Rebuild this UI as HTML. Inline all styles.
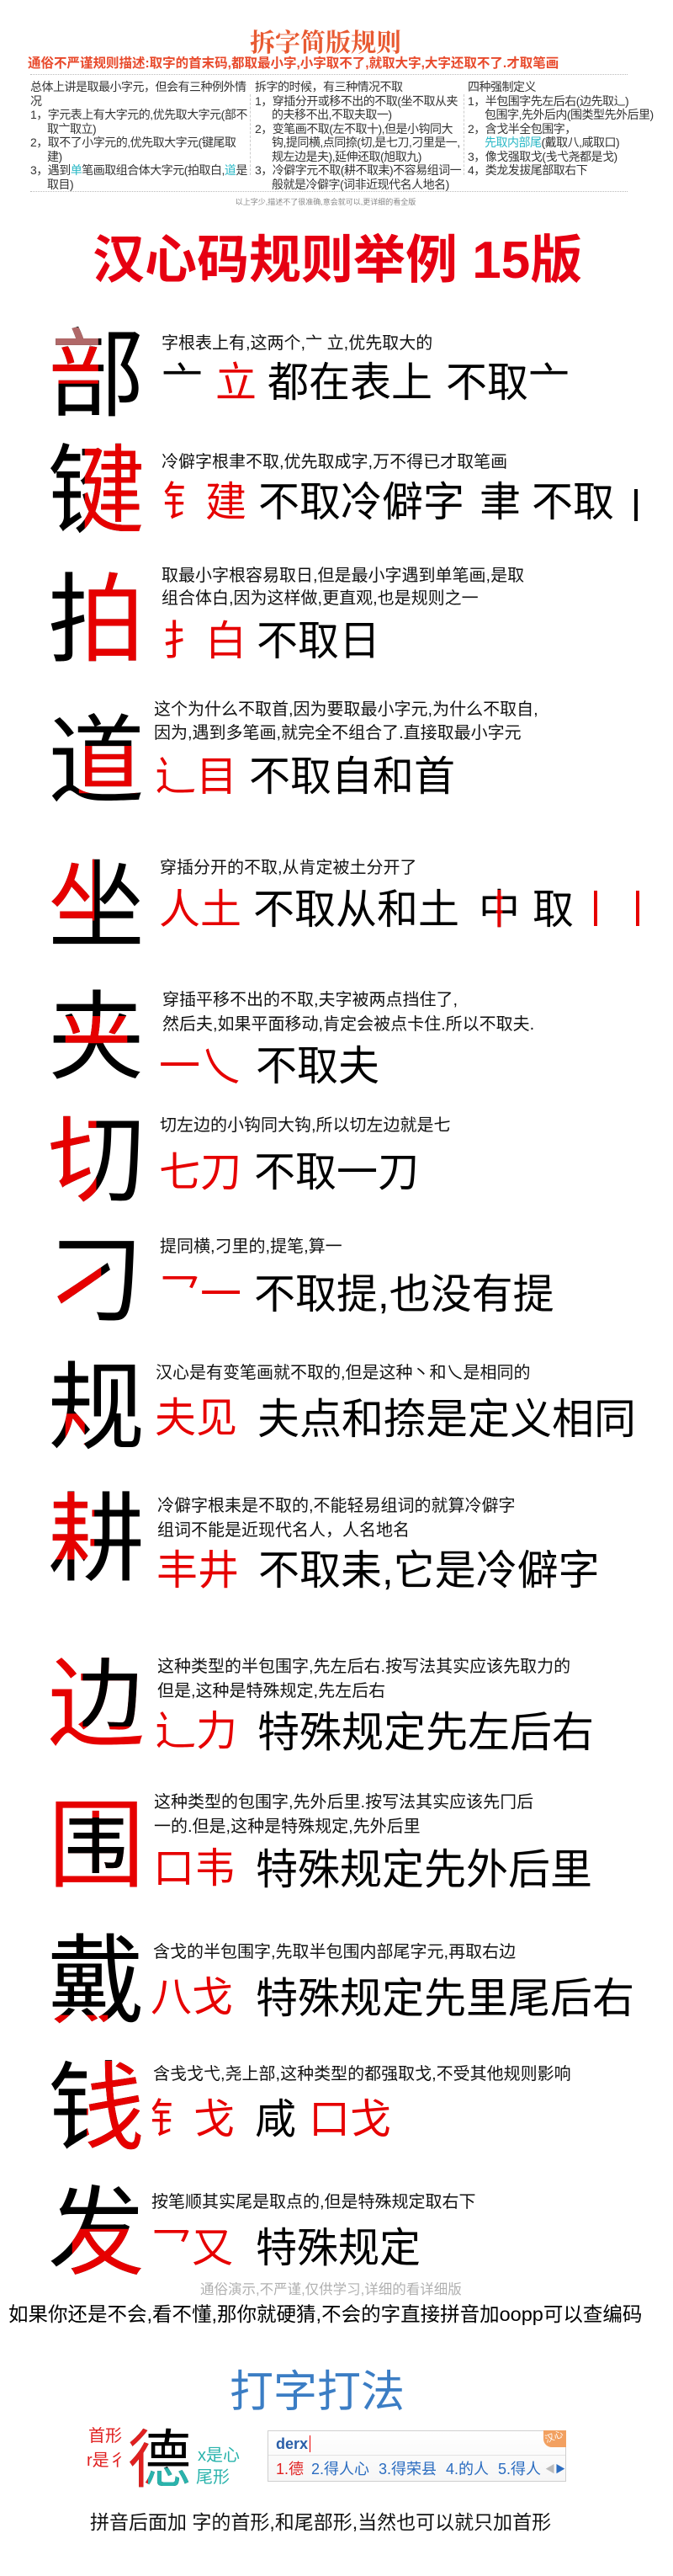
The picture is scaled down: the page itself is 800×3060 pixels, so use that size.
<!DOCTYPE html>
<html><head><meta charset="utf-8"><style>
*{margin:0;padding:0;box-sizing:border-box}
body{width:800px;height:3060px;background:#fff;position:relative;overflow:hidden;font-family:"Liberation Sans","Noto Sans CJK SC",sans-serif;color:#000}
.t{position:absolute;white-space:nowrap;line-height:1}
.b{position:absolute;font-size:115px;line-height:1;white-space:nowrap;left:57px}
.l1{font-size:20px;color:#111}
.l2{font-size:49px}
.r{color:#e60000}
.col{position:absolute;top:95px;font-size:14px;letter-spacing:-0.5px;line-height:16.5px;color:#333}
.col p{padding-left:20px;text-indent:-20px}
.col p.h{padding-left:0;text-indent:0}
.tl{color:#2ab8c6}
.bar{position:absolute;width:4px;height:42px;background:#e60000}
</style></head><body>

<div class="t" style="left:297px;top:33px;font-size:30px;font-family:'Noto Serif CJK SC',serif;font-weight:bold;color:#e85a32">拆字简版规则</div>
<div class="t" style="left:33px;top:68px;font-size:15.5px;font-weight:bold;color:#e84a2c">通俗不严谨规则描述:取字的首末码,都取最小字,小字取不了,就取大字,大字还取不了.才取笔画</div>
<div style="position:absolute;left:36px;top:88px;width:710px;border-top:1px dotted #bbb"></div>

<div class="col" style="left:36px;width:260px">
<p class="h">总体上讲是取最小字元，但会有三种例外情况</p>
<p>1，字元表上有大字元的,优先取大字元(部不取亠取立)</p>
<p>2，取不了小字元的,优先取大字元(键尾取建)</p>
<p>3，遇到<span class="tl">单</span>笔画取组合体大字元(拍取白,<span class="tl">道</span>是取目)</p>
</div>
<div style="position:absolute;left:297px;top:112px;height:96px;border-left:1px dashed #ccc"></div>
<div class="col" style="left:303px;width:248px">
<p class="h">拆字的时候，有三种情况不取</p>
<p>1，穿插分开或移不出的不取(坐不取从夹的夫移不出,不取夫取一)</p>
<p>2，变笔画不取(左不取十),但是小钩同大钩,提同横,点同捺(切,是七刀,刁里是一,规左边是夫),延伸还取(旭取九)</p>
<p>3，冷僻字元不取(耕不取耒)不容易组词一般就是冷僻字(词非近现代名人地名)</p>
</div>
<div style="position:absolute;left:551px;top:112px;height:96px;border-left:1px dashed #ccc"></div>
<div class="col" style="left:556px;width:222px">
<p class="h">四种强制定义</p>
<p>1，半包围字先左后右(边先取辶)<br>包围字,先外后内(围类型先外后里)</p>
<p>2，含戈半全包围字，<br><span class="tl">先取内部尾</span>(戴取八,咸取口)</p>
<p>3，像戈强取戈(戋弋尧都是戈)</p>
<p>4，类龙发拔尾部取右下</p>
</div>
<div style="position:absolute;left:36px;top:227px;width:710px;border-top:1px dotted #bbb"></div>
<div class="t" style="left:0;width:774px;text-align:center;top:236px;font-size:9px;color:#888">以上字少,描述不了很准确,意会就可以,更详细的看全版</div>

<div class="t" style="left:110px;top:279px;font-size:62px;font-weight:bold;color:#e60012">汉心码规则举例 15版</div>

<!-- 部 -->
<div class="b" style="top:389px">部</div>
<div class="b r" style="top:389px;clip-path:inset(20% 48% 42% 0)">部</div>
<div class="b" style="top:389px;color:#b06868;clip-path:inset(0 48% 80% 0)">部</div>
<div class="t l1" style="left:192px;top:398px">字根表上有,这两个,亠 立,优先取大的</div>
<div class="t l2" style="left:192px;top:431px">亠</div>
<div class="t l2 r" style="left:256px;top:431px">立</div>
<div class="t l2" style="left:318px;top:431px">都在表上</div>
<div class="t l2" style="left:530px;top:431px">不取亠</div>

<!-- 键 -->
<div class="b" style="top:527px">键</div>
<div class="b r" style="top:527px;clip-path:inset(0 0 0 38%)">键</div>
<div class="t l1" style="left:192px;top:539px">冷僻字根聿不取,优先取成字,万不得已才取笔画</div>
<div class="t l2 r" style="left:193px;top:573px">钅</div>
<div class="t l2 r" style="left:244px;top:573px">建</div>
<div class="t l2" style="left:307px;top:573px">不取冷僻字</div>
<div class="t l2" style="left:570px;top:573px">聿</div>
<div class="t l2" style="left:632px;top:573px">不取</div>
<div style="position:absolute;left:754px;top:581px;width:4px;height:38px;background:#000"></div>

<!-- 拍 -->
<div class="b" style="top:680px">拍</div>
<div class="b r" style="top:680px;clip-path:inset(0 0 0 42%)">拍</div>
<div class="t l1" style="left:192px;top:674px">取最小字根容易取日,但是最小字遇到单笔画,是取</div>
<div class="t l1" style="left:192px;top:701px">组合体白,因为这样做,更直观,也是规则之一</div>
<div class="t l2 r" style="left:193px;top:738px">扌</div>
<div class="t l2 r" style="left:244px;top:738px">白</div>
<div class="t l2" style="left:305px;top:738px">不取日</div>

<!-- 道 -->
<div class="b" style="top:848px">道</div>
<div class="b r" style="top:848px;clip-path:inset(33% 8% 18% 32%)">道</div>
<div class="t l1" style="left:183px;top:833px">这个为什么不取首,因为要取最小字元,为什么不取自,</div>
<div class="t l1" style="left:183px;top:861px">因为,遇到多笔画,就完全不组合了.直接取最小字元</div>
<div class="t l2 r" style="left:184px;top:899px">辶目</div>
<div class="t l2" style="left:296px;top:899px">不取自和首</div>

<!-- 坐 -->
<div class="b" style="top:1020px">坐</div>
<div class="b r" style="top:1020px;clip-path:inset(0 52% 36% 0)">坐</div>
<div class="t l1" style="left:190px;top:1021px">穿插分开的不取,从肯定被土分开了</div>
<div class="t l2 r" style="left:189px;top:1057px">人土</div>
<div class="t l2" style="left:301px;top:1057px">不取从和土</div>
<div class="t l2" style="left:569px;top:1057px">中</div>
<div class="t l2 r" style="left:569px;top:1057px;clip-path:inset(0 42% 0 42%)">中</div>
<div class="t l2" style="left:633px;top:1057px">取</div>
<div class="bar" style="left:706px;top:1058px"></div>
<div class="bar" style="left:756px;top:1058px"></div>

<!-- 夹 -->
<div class="b" style="top:1176px">夹</div>
<div class="b r" style="top:1176px;clip-path:inset(27% 18% 45% 18%)">夹</div>
<div class="t l1" style="left:193px;top:1178px">穿插平移不出的不取,夫字被两点挡住了,</div>
<div class="t l1" style="left:193px;top:1207px">然后夫,如果平面移动,肯定会被点卡住.所以不取夫.</div>
<div class="t l2 r" style="left:189px;top:1243px">一乀</div>
<div class="t l2" style="left:304px;top:1243px">不取夫</div>

<!-- 切 -->
<div class="b" style="top:1322px">切</div>
<div class="b r" style="top:1322px;clip-path:inset(0 50% 0 0)">切</div>
<div class="t l1" style="left:190px;top:1327px">切左边的小钩同大钩,所以切左边就是七</div>
<div class="t l2 r" style="left:189px;top:1369px">七刀</div>
<div class="t l2" style="left:302px;top:1369px">不取一刀</div>

<!-- 刁 -->
<div class="b" style="top:1464px">刁</div>
<div class="b r" style="top:1464px;clip-path:inset(30% 45% 22% 0)">刁</div>
<div class="t l1" style="left:190px;top:1471px">提同横,刁里的,提笔,算一</div>
<div class="t l2 r" style="left:189px;top:1514px">乛一</div>
<div class="t l2" style="left:302px;top:1514px">不取提,也没有提</div>

<!-- 规 -->
<div class="b" style="top:1616px">规</div>
<div class="b r" style="top:1616px;clip-path:inset(55% 62% 12% 18%)">规</div>
<div class="t l1" style="left:185px;top:1621px">汉心是有变笔画就不取的,但是这种丶和乀是相同的</div>
<div class="t l2 r" style="left:184px;top:1661px">夫见</div>
<div class="t" style="left:306px;top:1661px;font-size:50px">夫点和捺是定义相同</div>

<!-- 耕 -->
<div class="b" style="top:1772px">耕</div>
<div class="b r" style="top:1772px;clip-path:inset(0 52% 30% 0)">耕</div>
<div class="t l1" style="left:187px;top:1779px">冷僻字根耒是不取的,不能轻易组词的就算冷僻字</div>
<div class="t l1" style="left:187px;top:1808px">组词不能是近现代名人，人名地名</div>
<div class="t l2 r" style="left:186px;top:1842px">丰井</div>
<div class="t l2" style="left:307px;top:1842px">不取耒,它是冷僻字</div>

<!-- 边 -->
<div class="b r" style="top:1968px">边</div>
<div class="b" style="top:1968px;clip-path:polygon(36% 0,100% 0,100% 72%,36% 72%)">边</div>
<div class="t l1" style="left:187px;top:1970px">这种类型的半包围字,先左后右.按写法其实应该先取力的</div>
<div class="t l1" style="left:187px;top:1999px">但是,这种是特殊规定,先左后右</div>
<div class="t l2 r" style="left:184px;top:2033px">辶力</div>
<div class="t" style="left:306px;top:2033px;font-size:50px">特殊规定先左后右</div>

<!-- 围 -->
<div class="b r" style="top:2136px">围</div>
<div class="b" style="top:2136px;clip-path:inset(20% 16% 20% 16%)">围</div>
<div class="t l1" style="left:183px;top:2131px">这种类型的包围字,先外后里.按写法其实应该先冂后</div>
<div class="t l1" style="left:183px;top:2160px">一的.但是,这种是特殊规定,先外后里</div>
<div class="t l2 r" style="left:182px;top:2196px">口韦</div>
<div class="t" style="left:304px;top:2196px;font-size:50px">特殊规定先外后里</div>

<!-- 戴 -->
<div class="b" style="top:2297px">戴</div>
<div class="b r" style="top:2297px;clip-path:inset(84% 38% 0 0)">戴</div>
<div class="t l1" style="left:182px;top:2309px">含戈的半包围字,先取半包围内部尾字元,再取右边</div>
<div class="t l2 r" style="left:179px;top:2349px">八戈</div>
<div class="t" style="left:304px;top:2349px;font-size:50px">特殊规定先里尾后右</div>

<!-- 钱 -->
<div class="b" style="top:2448px">钱</div>
<div class="b r" style="top:2448px;clip-path:inset(0 0 0 40%)">钱</div>
<div class="t l1" style="left:182px;top:2454px">含戋戈弋,尧上部,这种类型的都强取戈,不受其他规则影响</div>
<div class="t l2 r" style="left:178px;top:2494px">钅</div>
<div class="t l2 r" style="left:230px;top:2494px">戈</div>
<div class="t l2" style="left:303px;top:2494px">咸</div>
<div class="t l2 r" style="left:367px;top:2494px">口戈</div>

<!-- 发 -->
<div class="b" style="top:2596px">发</div>
<div class="b r" style="top:2596px;clip-path:inset(45% 0 0 25%)">发</div>
<div class="t l1" style="left:180px;top:2606px">按笔顺其实尾是取点的,但是特殊规定取右下</div>
<div class="t l2 r" style="left:179px;top:2647px">乛又</div>
<div class="t l2" style="left:304px;top:2647px">特殊规定</div>

<div class="t" style="left:238px;top:2712px;font-size:16.5px;color:#b0b0b0">通俗演示,不严谨,仅供学习,详细的看详细版</div>
<div class="t" style="left:10px;top:2738px;font-size:23.5px">如果你还是不会,看不懂,那你就硬猜,不会的字直接拼音加oopp可以查编码</div>

<div class="t" style="left:273px;top:2816px;font-size:52px;color:#3b7dc4">打字打法</div>

<div class="t" style="left:105px;top:2884px;font-size:20px;color:#e02020">首形</div>
<div class="t" style="left:103px;top:2913px;font-size:20px;color:#e02020">r是彳</div>
<div class="t" style="left:152px;top:2885px;font-size:75px">德</div>
<div class="t" style="left:152px;top:2885px;font-size:75px;color:#e02020;clip-path:inset(0 68% 0 0)">德</div>
<div class="t" style="left:152px;top:2885px;font-size:75px;color:#2ab3ac;clip-path:inset(62% 0 0 32%)">德</div>
<div class="t" style="left:235px;top:2907px;font-size:20px;color:#2ab3ac">x是心</div>
<div class="t" style="left:233px;top:2933px;font-size:20px;color:#2ab3ac">尾形</div>

<div style="position:absolute;left:318px;top:2887px;width:355px;height:61px;border:1px solid #cfcfcf;background:linear-gradient(#fff,#f6f6f6)"></div>
<div style="position:absolute;left:319px;top:2916px;width:353px;border-top:1px solid #e2e2e2"></div>
<div class="t" style="left:328px;top:2894px;font-size:18px;font-weight:bold;color:#2a5ea8">derx</div>
<div style="position:absolute;left:368px;top:2893px;width:1px;height:20px;background:#e00"></div>
<div style="position:absolute;left:646px;top:2887px;width:27px;height:20px;background:#f2a060;border-radius:0 0 0 10px"></div>
<div class="t" style="left:648px;top:2890px;font-size:11px;color:#fff;transform:rotate(-20deg)">汉心</div>
<div class="t" style="left:328px;top:2924px;font-size:18px;color:#e02020">1.德</div>
<div class="t" style="left:370px;top:2924px;font-size:18px;color:#2a6cc0;word-spacing:6px">2.得人心 3.得荣县 4.的人 5.得人</div>
<div class="t" style="left:648px;top:2927px;font-size:12px;color:#bbb">◀</div>
<div class="t" style="left:660px;top:2927px;font-size:12px;color:#2a6cc0">▶</div>

<div class="t" style="left:107px;top:2985px;font-size:23px;color:#111">拼音后面加 字的首形,和尾部形,当然也可以就只加首形</div>
</body></html>
